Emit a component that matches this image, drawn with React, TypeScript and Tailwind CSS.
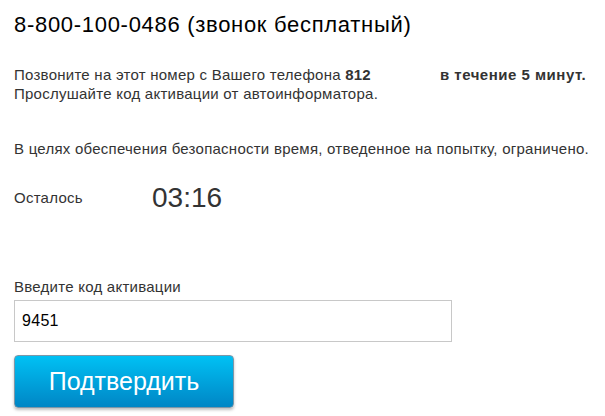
import { useState } from "react";

export default function App() {
  const [code, setCode] = useState("9451");

  return (
    <div className="w-[605px] h-[416px] bg-white px-[14px] pt-[12px] font-['Liberation_Sans',Arial,sans-serif] text-[#333]">
      {/* Heading */}
      <h1 className="text-[22px] leading-[26px] tracking-[0.7px] text-black">
        8-800-100-0486 (звонок бесплатный)
      </h1>

      {/* Instructions */}
      <p className="mt-[27px] text-[15px] leading-[19px] tracking-[0.25px] whitespace-nowrap">
        Позвоните на этот номер с Вашего телефона <b>812</b>
        <span className="inline-block w-[69px]" />
        <b className="tracking-[0.5px]">в течение 5 минут.</b>
        <br />
        Прослушайте код активации от автоинформатора.
      </p>

      <p className="mt-[36px] text-[15px] leading-[19px] tracking-[0.25px] whitespace-nowrap">
        В целях обеспечения безопасности время, отведенное на попытку, ограничено.
      </p>

      {/* Timer */}
      <div className="mt-[24px] flex items-center">
        <span className="w-[138px] text-[15px] tracking-[0.25px]">Осталось</span>
        <span className="text-[28px] leading-[32px]">03:16</span>
      </div>

      {/* Code form */}
      <label className="mt-[63px] block text-[15px] leading-[19px] tracking-[0.25px]">
        Введите код активации
      </label>
      <input
        value={code}
        onChange={(e) => setCode(e.target.value)}
        className="mt-[4px] block w-[438px] h-[42px] border border-[#c8c8c8] px-[7px] text-[16px] tracking-[0.3px] text-black outline-none"
      />
      <button className="mt-[13px] w-[220px] h-[53px] rounded-[4px] border border-[#7d97a8] bg-gradient-to-b from-[#00c1f4] to-[#0086c5] text-[25px] text-white shadow-[0_2px_3px_rgba(0,0,0,0.25)]">
        Подтвердить
      </button>
    </div>
  );
}
